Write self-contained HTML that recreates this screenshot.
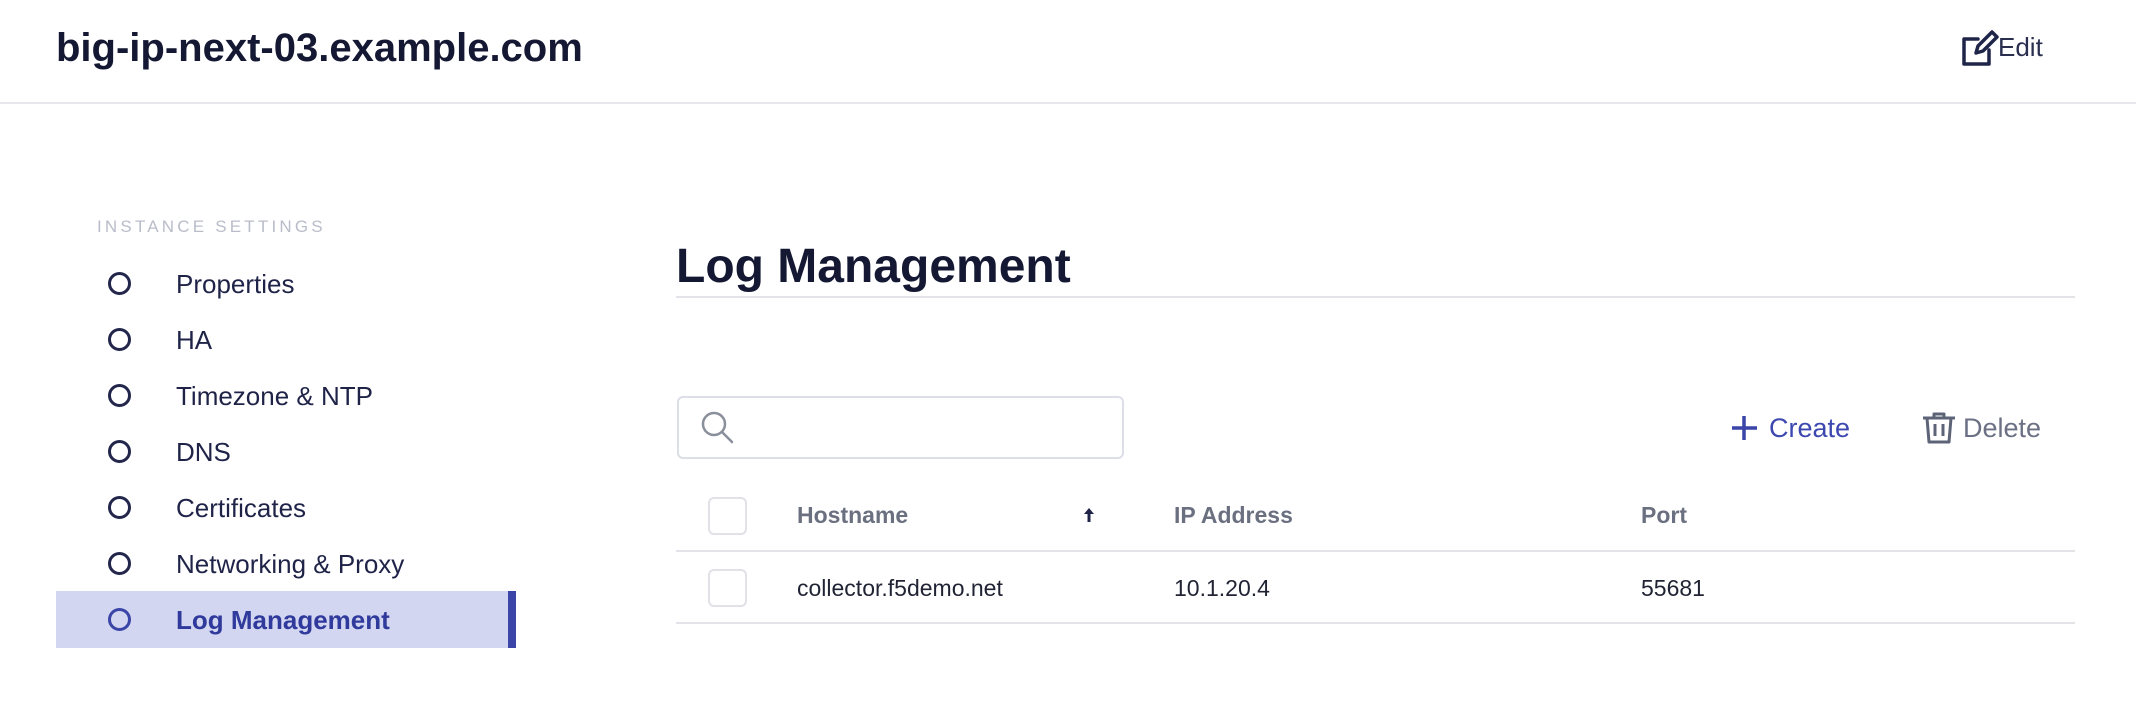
<!DOCTYPE html>
<html><head><meta charset="utf-8"><style>
*{margin:0;padding:0;box-sizing:border-box}
body{width:2136px;height:706px;background:#fff;font-family:"Liberation Sans",Arial,sans-serif;position:relative;overflow:hidden;color:#1f2333}
.a{position:absolute;white-space:nowrap}
.title{left:56px;top:24px;font-size:40px;font-weight:bold;color:#141833;line-height:48px}
.hdr{left:0;top:102px;width:2136px;height:2px;background:#e6e8ee}
.sec{left:97px;top:217px;font-size:17px;letter-spacing:3.2px;color:#b9bdc9;line-height:20px}
.nav{left:176px;font-size:26px;color:#1f2348;line-height:30px}
.circ{left:108px;width:23px;height:23px;border:3px solid #22264a;border-radius:50%}
.act{left:56px;top:591px;width:460px;height:57px;background:#d2d6f0}
.bar{left:508px;top:591px;width:8px;height:57px;background:#3b45a8}
.h1{left:676px;top:239px;font-size:48px;font-weight:bold;color:#141833;line-height:56px}
.line{left:676px;width:1399px;height:2px;background:#e2e4ea}
.search{left:677px;top:396px;width:447px;height:63px;border:2px solid #dcdfe6;border-radius:6px}
.th{font-size:23px;font-weight:bold;color:#6b7080;line-height:28px;top:501px}
.td{font-size:23px;color:#1f2333;line-height:28px;top:574px}
.cb{left:708px;width:39px;height:38px;border:2px solid #e0e2e8;border-radius:6px}
</style></head><body>
<div class="a title">big-ip-next-03.example.com</div>
<svg class="a" style="left:1961px;top:29px" width="38" height="38" viewBox="0 0 38 38" fill="none" stroke="#1f2548" stroke-width="3.5" stroke-linejoin="round" stroke-linecap="round"><path d="M17 10H3v25h25V21"/><path d="M31 3l5 5-14 14-7 2 2-7z"/></svg>
<div class="a" style="left:1998px;top:32px;font-size:26px;color:#2a2f50;line-height:30px">Edit</div>
<div class="a hdr"></div>
<div class="a sec">INSTANCE SETTINGS</div>
<div class="a act"></div><div class="a bar"></div>
<div class="a circ" style="top:272px"></div><div class="a nav" style="top:269px">Properties</div>
<div class="a circ" style="top:328px"></div><div class="a nav" style="top:325px">HA</div>
<div class="a circ" style="top:384px"></div><div class="a nav" style="top:381px">Timezone &amp; NTP</div>
<div class="a circ" style="top:440px"></div><div class="a nav" style="top:437px">DNS</div>
<div class="a circ" style="top:496px"></div><div class="a nav" style="top:493px">Certificates</div>
<div class="a circ" style="top:552px"></div><div class="a nav" style="top:549px">Networking &amp; Proxy</div>
<div class="a circ" style="top:608px;border-color:#3b45a8"></div><div class="a nav" style="top:605px;font-weight:bold;color:#2f3a9c">Log Management</div>
<div class="a h1">Log Management</div>
<div class="a line" style="top:296px"></div>
<div class="a search"></div>
<svg class="a" style="left:700px;top:410px" width="36" height="36" viewBox="0 0 36 36" fill="none" stroke="#8a8f9c" stroke-width="2.5" stroke-linecap="round"><circle cx="14" cy="14" r="11"/><path d="M22 22l10 10"/></svg>
<svg class="a" style="left:1731px;top:416px" width="26" height="24" viewBox="0 0 26 24" stroke="#3b45a8" stroke-width="3.5"><path d="M13 0v24M1 12h25"/></svg>
<div class="a" style="left:1769px;top:413px;font-size:27px;color:#3c48b0;line-height:30px">Create</div>
<svg class="a" style="left:1921px;top:412px" width="36" height="32" viewBox="0 0 36 32" fill="none" stroke="#5e6478" stroke-width="3" stroke-linejoin="round"><path d="M2 6h32M13 6V2h10v4M6 6l2 24h20l2-24M14 12v12M22 12v12"/></svg>
<div class="a" style="left:1963px;top:413px;font-size:27px;color:#6b7085;line-height:30px">Delete</div>
<div class="a cb" style="top:497px"></div>
<div class="a th" style="left:797px">Hostname</div>
<svg class="a" style="left:1083px;top:508px" width="12" height="14" viewBox="0 0 12 14"><path d="M6 0L1 6h3.5v8h3V6H11z" fill="#1f2348"/></svg>
<div class="a th" style="left:1174px">IP Address</div>
<div class="a th" style="left:1641px">Port</div>
<div class="a line" style="top:550px"></div>
<div class="a cb" style="top:569px"></div>
<div class="a td" style="left:797px">collector.f5demo.net</div>
<div class="a td" style="left:1174px">10.1.20.4</div>
<div class="a td" style="left:1641px">55681</div>
<div class="a line" style="top:622px"></div>
</body></html>
